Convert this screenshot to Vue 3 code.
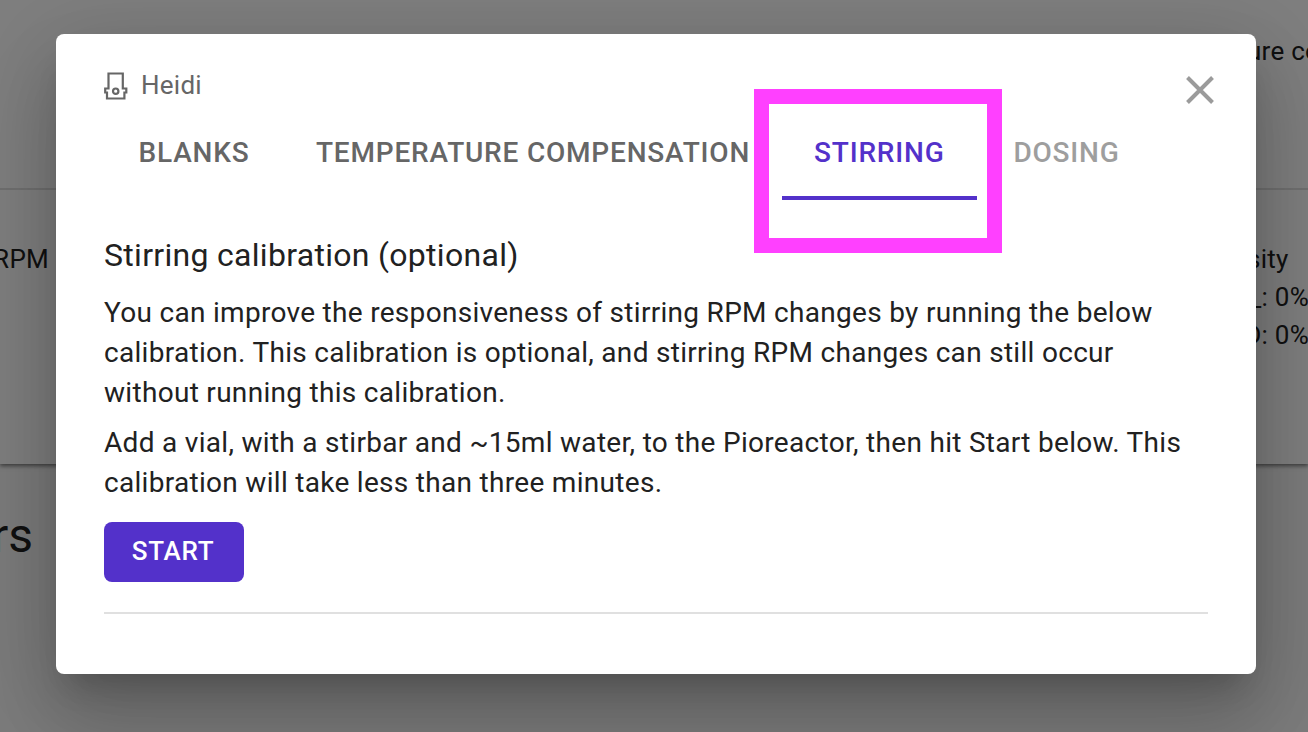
<script setup>
import { ref } from 'vue'

const tabs = [
  { id: 'blanks', label: 'Blanks' },
  { id: 'temperature', label: 'Temperature compensation' },
  { id: 'stirring', label: 'Stirring' },
  { id: 'dosing', label: 'Dosing', disabled: true }
]
const active = ref('stirring')
</script>

<template>
  <div class="screen">
    <main class="page" aria-hidden="true">
      <section class="card">
        <div class="row row-head">
          <span class="cell-left"></span>
          <span class="cell-right">ure co</span>
        </div>
        <div class="row row-body">
          <span class="cell-left">RPM</span>
          <div class="cell-right">
            <div>sity</div>
            <div class="led">_: 0%</div>
            <div class="led">D: 0%</div>
          </div>
        </div>
      </section>
      <h2 class="page-title">rs</h2>
    </main>

    <div class="backdrop">
      <div class="dialog" role="dialog" aria-modal="true" aria-labelledby="unit">
        <header class="head">
          <div id="unit" class="unit">
            <svg class="unit-icon" viewBox="0 0 24 28" width="24" height="28" fill="none" stroke="currentColor" stroke-width="2.200">
              <path d="M4.500 1.500H18.800V16.500H22.300V20.500H20.400V26.500H3V20.500H1.200V16.500H4.500Z" />
              <circle cx="11.700" cy="19.200" r="2.700" />
            </svg>
            <span>Heidi</span>
          </div>
          <button class="close" type="button" aria-label="Close">
            <svg viewBox="0 0 28 28" width="28" height="28" fill="none" stroke="currentColor" stroke-width="4">
              <path d="M1.500 1.500L26.500 26.500M26.500 1.500L1.500 26.500" />
            </svg>
          </button>
        </header>

        <div class="tabs" role="tablist">
          <button
            v-for="tab in tabs"
            :key="tab.id"
            type="button"
            role="tab"
            class="tab"
            :class="{ active: active === tab.id }"
            :aria-selected="active === tab.id"
            :disabled="tab.disabled"
            @click="active = tab.id"
          >{{ tab.label }}<template v-if="active === tab.id"><span class="marker"></span><span class="highlight"></span></template></button>
        </div>

        <section class="panel">
          <h3 class="panel-title">Stirring calibration (optional)</h3>
          <p>You can improve the responsiveness of stirring RPM changes by running the below calibration. This calibration is optional, and stirring RPM changes can still occur without running this calibration.</p>
          <p>Add a vial, with a stirbar and ~15ml water, to the Pioreactor, then hit Start below. This calibration will take less than three minutes.</p>
          <button class="start" type="button">Start</button>
          <hr class="rule" />
        </section>
      </div>
    </div>
  </div>
</template>

<style>
html,
body {
  margin: 0;
  overflow: hidden;
}
</style>

<style scoped>
.screen {
  position: relative;
  min-height: 100vh;
  overflow: hidden;
  box-sizing: border-box;
  background: #f8f8f8;
  color: #212121;
  font-family: Roboto, "Liberation Sans", sans-serif;
}
.card {
  background: #fff;
  box-shadow: 0 2px 4px rgba(0, 0, 0, 0.5);
}
.row {
  display: flex;
  justify-content: space-between;
  box-sizing: border-box;
  font-size: 26px;
  line-height: 38px;
  letter-spacing: 0.01em;
  white-space: nowrap;
}
.row-head {
  height: 190px;
  padding-top: 32px;
  border-bottom: 2px solid #e0e0e0;
}
.row-body {
  height: 274px;
  padding-top: 50px;
}
.cell-left {
  display: flex;
  justify-content: flex-end;
  width: 49px;
}
.cell-right {
  width: 61px;
}
.led {
  display: flex;
  justify-content: flex-end;
  width: 62px;
}
.page-title {
  display: flex;
  justify-content: flex-end;
  width: 33px;
  margin: 44px 0 0;
  font-size: 48px;
  line-height: 56px;
  font-weight: 400;
}
.backdrop {
  position: absolute;
  inset: 0;
  display: flex;
  justify-content: center;
  align-items: flex-start;
  padding: 34px 52px 58px 56px;
  background: rgba(0, 0, 0, 0.5);
}
.dialog {
  flex: 1;
  max-width: 1200px;
  box-sizing: border-box;
  padding: 34px 48px 60px;
  border-radius: 8px;
  background: #fff;
  box-shadow: 0 22px 30px -14px rgba(0, 0, 0, 0.2), 0 48px 76px 6px rgba(0, 0, 0, 0.14), 0 18px 92px 16px rgba(0, 0, 0, 0.12);
}
.head {
  display: flex;
  justify-content: space-between;
  height: 36px;
}
.unit {
  display: flex;
  align-items: flex-end;
  gap: 13px;
  height: 32px;
  color: #666;
  font-size: 26px;
  line-height: 30px;
  letter-spacing: 0.01em;
}
.close {
  display: flex;
  align-self: flex-start;
  margin: 8px -6px 0 0;
  padding: 0;
  border: 0;
  background: none;
  color: #9b9b9b;
}
.tabs {
  display: flex;
}
.tab {
  position: relative;
  min-width: 180px;
  height: 96px;
  padding: 2px 32px 0;
  border: 0;
  background: none;
  color: #666;
  font: 500 28px/48px Roboto, "Liberation Sans", sans-serif;
  letter-spacing: 0.02857em;
  text-transform: uppercase;
  white-space: nowrap;
}
.tab:disabled {
  color: #9e9e9e;
}
.tab.active {
  color: #5331ca;
}
.marker {
  position: absolute;
  left: 0;
  right: 0;
  bottom: 0;
  height: 4px;
  background: #5331ca;
}
.highlight {
  position: absolute;
  inset: -15px -25px -53px -28px;
  border: 15px solid #ff40ff;
  pointer-events: none;
}
.panel {
  padding-top: 31px;
}
.panel-title {
  margin: 0 0 14px;
  font-size: 32px;
  line-height: 48px;
  font-weight: 400;
  letter-spacing: 0.00938em;
}
.panel p {
  margin: 0 0 10px;
  font-size: 28px;
  line-height: 40px;
  letter-spacing: 0.01071em;
}
.start {
  display: block;
  margin: 19px 0 30px;
  width: 140px;
  height: 60px;
  padding: 0 2px 2px 0;
  border: 0;
  border-radius: 8px;
  background: #5331ca;
  color: #fff;
  font: 500 26px/44px Roboto, "Liberation Sans", sans-serif;
  letter-spacing: 0.02857em;
  text-transform: uppercase;
}
.rule {
  height: 2px;
  margin: 0;
  border: 0;
  background: #e0e0e0;
}
</style>
